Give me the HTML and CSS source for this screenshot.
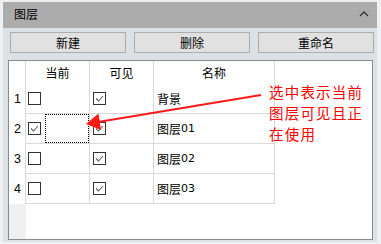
FILE: index.html
```html
<!DOCTYPE html>
<html>
<head>
<meta charset="utf-8">
<link rel="stylesheet" href="styles.css">
</head>
<body>
<div class="panel">
  <div class="title">
    <span>图层</span>
    <svg class="chev" width="10" height="6" viewBox="0 0 10 6"><polyline points="1,5 5,1 9,5" fill="none" stroke="#333" stroke-width="1.3"/></svg>
  </div>
  <div class="buttons">
    <button class="btn">新建</button>
    <button class="btn">删除</button>
    <button class="btn">重命名</button>
  </div>
  <div class="table">
    <div class="grid">
      <div class="rh"></div>
      <div class="hc">当前</div>
      <div class="hc">可见</div>
      <div class="hc">名称</div>
      <div class="hc last"></div>

      <div class="rh">1</div>
      <div class="cell cur"><span class="cb"></span></div>
      <div class="cell vis"><span class="cb on"><svg viewBox="0 0 11 11" width="11" height="11"><polyline points="2,5.5 4.5,8 9,3" fill="none" stroke="#5f5f5f" stroke-width="1.1"/></svg></span></div>
      <div class="cell name">背景</div>
      <div class="fill"></div>

      <div class="rh">2</div>
      <div class="cell cur"><span class="cb on"><svg viewBox="0 0 11 11" width="11" height="11"><polyline points="2,5.5 4.5,8 9,3" fill="none" stroke="#5f5f5f" stroke-width="1.1"/></svg></span><span class="focus"></span></div>
      <div class="cell vis"><span class="cb on"><svg viewBox="0 0 11 11" width="11" height="11"><polyline points="2,5.5 4.5,8 9,3" fill="none" stroke="#5f5f5f" stroke-width="1.1"/></svg></span></div>
      <div class="cell name">图层<span class="num">01</span></div>
      <div class="fill"></div>

      <div class="rh">3</div>
      <div class="cell cur"><span class="cb"></span></div>
      <div class="cell vis"><span class="cb on"><svg viewBox="0 0 11 11" width="11" height="11"><polyline points="2,5.5 4.5,8 9,3" fill="none" stroke="#5f5f5f" stroke-width="1.1"/></svg></span></div>
      <div class="cell name">图层<span class="num">02</span></div>
      <div class="fill"></div>

      <div class="rh">4</div>
      <div class="cell cur"><span class="cb"></span></div>
      <div class="cell vis"><span class="cb on"><svg viewBox="0 0 11 11" width="11" height="11"><polyline points="2,5.5 4.5,8 9,3" fill="none" stroke="#5f5f5f" stroke-width="1.1"/></svg></span></div>
      <div class="cell name">图层<span class="num">03</span></div>
      <div class="fill"></div>

      <div class="rh empty"></div>
      <div class="blank"></div>
    </div>
  </div>
  <svg class="arrow" width="381" height="244" viewBox="0 0 381 244">
    <line x1="261" y1="95" x2="98" y2="122" stroke="#ff1a1a" stroke-width="2.2"/>
    <polygon points="86,124 98.5,113.5 101,130" fill="#ff1a1a"/>
  </svg>
  <div class="note">选中表示当前<br>图层可见且正<br>在使用</div>
</div>
</body>
</html>
```

FILE: styles.css
```css
* { box-sizing: border-box; }
body {
  margin: 0;
  background: #eff0f2;
  font-family: "Liberation Sans", "Noto Sans CJK SC", sans-serif;
  font-size: 12px;
  color: #000;
}
.panel {
  position: relative;
  margin: 2px 4px 0 3px;
  width: 374px;
  height: 240px;
  background: #dce1e6;
  display: flex;
  flex-direction: column;
}
.title {
  height: 26px;
  background: #acacac;
  display: flex;
  align-items: center;
  justify-content: space-between;
  padding: 0 8px 0 11px;
  font-size: 12px;
  line-height: 14px;
}
.chev { margin-top: -2px; }
.buttons {
  margin-top: 4px;
  padding-left: 7px;
  display: flex;
  gap: 8px;
}
.btn {
  width: 116px;
  height: 21px;
  background: #e1e1e1;
  border: 1px solid #adadad;
  font-family: "Liberation Sans", "Noto Sans CJK SC", sans-serif;
  font-size: 12px;
  padding: 0;
  color: #000;
}
.table {
  margin: 7px 0 0 5px;
  width: 365px;
  height: 180px;
  border: 1px solid #868b92;
  background: #fff;
}
.grid {
  display: grid;
  height: 100%;
  grid-template-columns: 17px 64px 64px 121px 1fr;
  grid-template-rows: 23px repeat(4, 30px) 1fr;
}
.rh {
  border-right: 1px solid #d9d9d9;
  display: flex;
  align-items: center;
  justify-content: center;
  padding-left: 1px;
  font-size: 12.5px;
}
.rh.empty { background: #f0f0f0; border-right: none; }
.hc {
  border-right: 1px solid #d9d9d9;
  display: flex;
  align-items: center;
  justify-content: center;
  font-size: 12px;
}
.hc.last { border-right: none; }
.cell {
  position: relative;
  border-right: 1px solid #d9d9d9;
  border-bottom: 1px solid #d9d9d9;
  display: flex;
  align-items: center;
}
.cur { padding-left: 2px; }
.vis { padding-left: 3px; }
.name { padding-left: 3px; font-size: 12px; }
.num { font-family: "DejaVu Sans", sans-serif; font-size: 11px; }
.cb {
  display: flex;
  width: 13px;
  height: 13px;
  border: 1px solid #333;
  background: #fff;
}
.focus {
  position: absolute;
  left: 19px;
  right: 0;
  top: 0;
  bottom: 0;
  border: 1px dotted #000;
}
.blank { grid-column: 2 / 6; }
.arrow {
  position: absolute;
  left: -3px;
  top: -2px;
  pointer-events: none;
}
.note {
  position: absolute;
  left: 266px;
  top: 79px;
  color: #ff0000;
  font-family: "Noto Sans CJK SC", sans-serif;
  font-size: 14.5px;
  letter-spacing: 1.2px;
  line-height: 21px;
}
```
